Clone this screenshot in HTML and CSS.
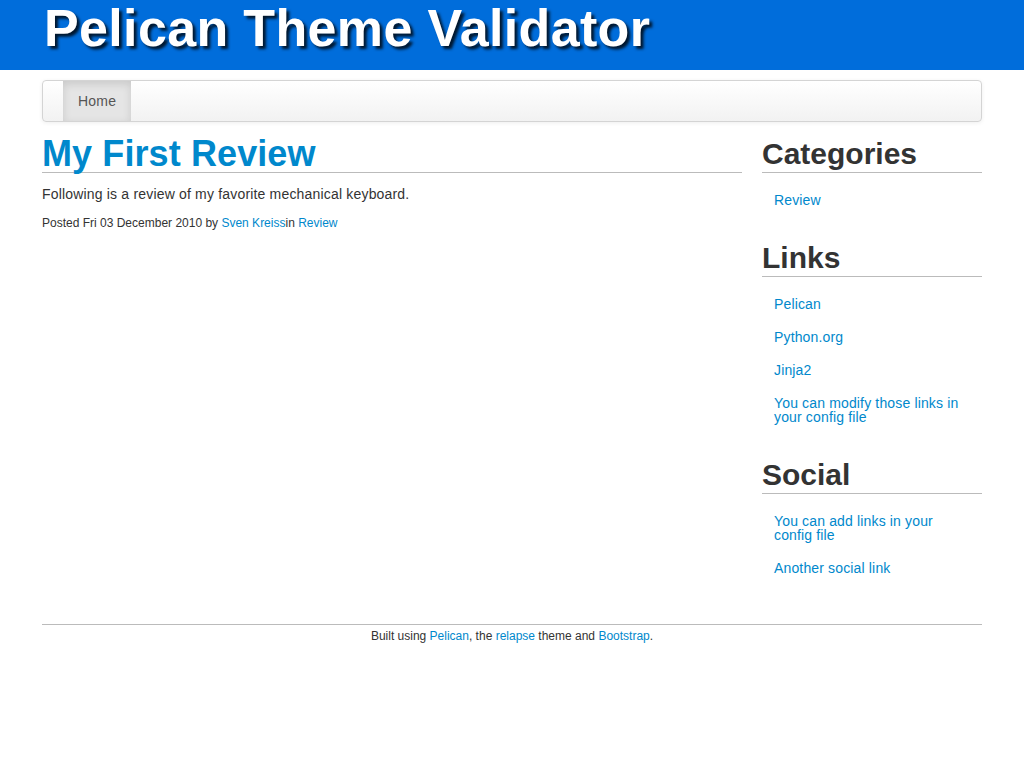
FILE: index.html
```html
<!DOCTYPE html>
<html>
<head>
<meta charset="utf-8">
<title>Pelican Theme Validator</title>
<link rel="stylesheet" href="styles.css">
</head>
<body>
<header class="masthead">
  <div class="container">
    <h1 class="site-title">Pelican Theme Validator</h1>
  </div>
</header>
<div class="container">
  <nav class="navbar">
    <ul class="nav">
      <li class="active"><a href="#">Home</a></li>
    </ul>
  </nav>
  <div class="row">
    <main class="content">
      <h1 class="entry-title"><a href="#">My First Review</a></h1>
      <p class="summary">Following is a review of my favorite mechanical keyboard.</p>
      <p class="meta">Posted Fri 03 December 2010 by <a href="#">Sven Kreiss</a>in <a href="#">Review</a></p>
    </main>
    <aside class="sidebar">
      <section class="widget">
        <h2>Categories</h2>
        <ul>
          <li><a href="#">Review</a></li>
        </ul>
      </section>
      <section class="widget">
        <h2>Links</h2>
        <ul>
          <li><a href="#">Pelican</a></li>
          <li><a href="#">Python.org</a></li>
          <li><a href="#">Jinja2</a></li>
          <li><a href="#">You can modify those links in your config file</a></li>
        </ul>
      </section>
      <section class="widget">
        <h2>Social</h2>
        <ul>
          <li><a href="#">You can add links in your config file</a></li>
          <li><a href="#">Another social link</a></li>
        </ul>
      </section>
    </aside>
  </div>
  <footer class="footer">
    Built using <a href="#">Pelican</a>, the <a href="#">relapse</a> theme and <a href="#">Bootstrap</a>.
  </footer>
</div>
</body>
</html>
```
FILE: styles.css
```css
* { box-sizing: border-box; }
html, body { margin: 0; padding: 0; background: #fff; }
body {
  font-family: "Liberation Sans", Arial, sans-serif;
  font-size: 14px;
  color: #333;
}
a { color: #0088cc; text-decoration: none; }

.container { width: 940px; margin: 0 auto; }

.masthead { background: #006ddb; height: 70px; }
.site-title {
  margin: 0;
  padding-top: 2px;
  padding-left: 2px;
  font-size: 52px;
  line-height: 52px;
  font-weight: bold;
  letter-spacing: 0.35px;
  color: #fff;
  text-shadow: 3px 3px 3px rgba(0, 0, 0, 0.8);
}

.navbar {
  margin-top: 10px;
  height: 42px;
  border: 1px solid #d4d4d4;
  border-radius: 4px;
  background: linear-gradient(#ffffff, #f2f2f2);
  box-shadow: 0 1px 4px rgba(0, 0, 0, 0.065);
  padding-left: 20px;
}
.nav { list-style: none; margin: 0; padding: 0; display: flex; height: 40px; }
.nav li a {
  display: block;
  height: 40px;
  line-height: 40px;
  padding: 0 15px;
  color: #555;
  font-size: 14px;
  letter-spacing: 0.2px;
}
.nav li.active a {
  background: #e5e5e5;
  box-shadow: inset 0 3px 8px rgba(0, 0, 0, 0.125);
}

.row { display: flex; gap: 20px; }
.content { width: 700px; }
.sidebar { width: 220px; }

.entry-title {
  margin: 12px 0 0;
  padding-top: 2px;
  font-size: 36px;
  line-height: 36px;
  font-weight: bold;
  letter-spacing: 0.1px;
  border-bottom: 1px solid #bbb;
}
.summary { margin: 11px 0 0; line-height: 20px; font-size: 14px; letter-spacing: 0.18px; }
.meta { margin: 10px 0 0; font-size: 12px; line-height: 18px; }

.widget h2 {
  margin: 0;
  font-size: 30px;
  line-height: 36px;
  padding-top: 2px;
  font-weight: bold;
  color: #333;
  border-bottom: 1px solid #bbb;
}
.widget:first-child h2 { margin-top: 12px; }
.widget ul { list-style: none; margin: 11px 0 21px; padding: 0; }
.widget li a {
  display: block;
  padding: 9px 12px 10px;
  line-height: 14px;
  font-size: 14px;
  letter-spacing: 0.15px;
}

.footer {
  margin-top: 18px;
  border-top: 1px solid #bbb;
  text-align: center;
  font-size: 12px;
  line-height: 18px;
  padding-top: 2px;
}
```
